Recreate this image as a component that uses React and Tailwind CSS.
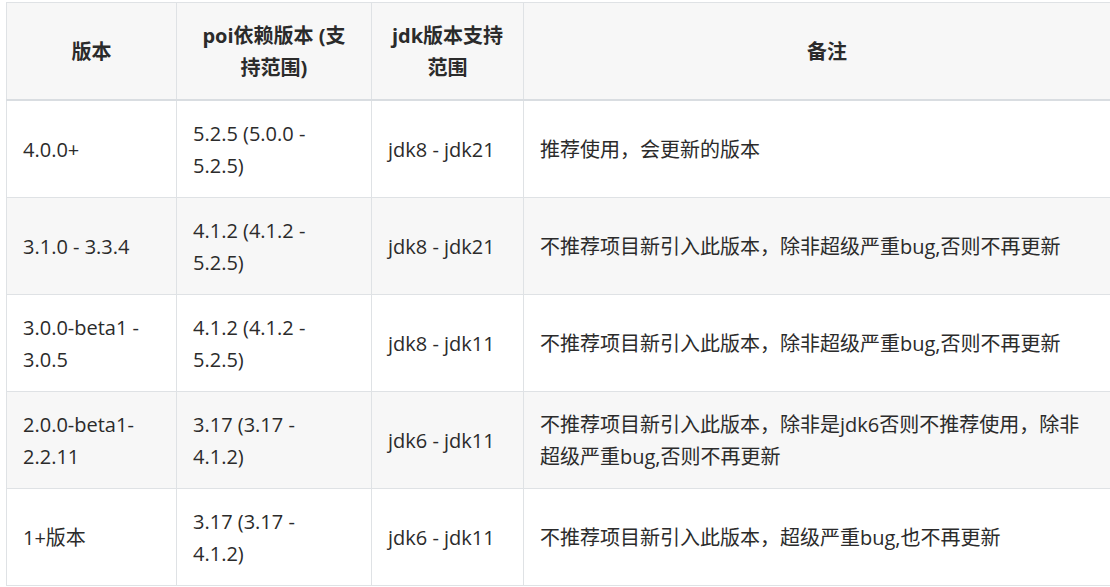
const rows = [
  { v: ['4.0.0+'], poi: ['5.2.5 (5.0.0 -', '5.2.5)'], jdk: 'jdk8 - jdk21', note: ['推荐使用，会更新的版本'] },
  { v: ['3.1.0 - 3.3.4'], poi: ['4.1.2 (4.1.2 -', '5.2.5)'], jdk: 'jdk8 - jdk21', note: ['不推荐项目新引入此版本，除非超级严重bug,否则不再更新'] },
  { v: ['3.0.0-beta1 -', '3.0.5'], poi: ['4.1.2 (4.1.2 -', '5.2.5)'], jdk: 'jdk8 - jdk11', note: ['不推荐项目新引入此版本，除非超级严重bug,否则不再更新'] },
  { v: ['2.0.0-beta1-', '2.2.11'], poi: ['3.17 (3.17 -', '4.1.2)'], jdk: 'jdk6 - jdk11', note: ['不推荐项目新引入此版本，除非是jdk6否则不推荐使用，除非', '超级严重bug,否则不再更新'] },
  { v: ['1+版本'], poi: ['3.17 (3.17 -', '4.1.2)'], jdk: 'jdk6 - jdk11', note: ['不推荐项目新引入此版本，超级严重bug,也不再更新'] },
];

const td = 'border border-[#dfe2e5] px-4 pt-[17px] pb-[15px] align-middle';
const th = 'border border-[#dfe2e5] border-b-2 border-b-[#d9dde1] px-4 pt-[17px] pb-[15px] align-middle text-center font-bold';

function Lines({ items }) {
  return items.map((t, i) => (
    <div key={i} className="whitespace-nowrap">{t}</div>
  ));
}

export default function App() {
  return (
    <div className="w-[1110px] h-[587px] overflow-hidden bg-white pt-[2px] pl-[6px] text-[#2b2b2b] font-['Open_Sans','Noto_Sans_CJK_SC',sans-serif] text-[20px] leading-[32px]">
      <table className="table-fixed border-collapse w-[1124px]">
        <colgroup>
          <col className="w-[170px]" />
          <col className="w-[195px]" />
          <col className="w-[152px]" />
          <col className="w-[607px]" />
        </colgroup>
        <thead>
          <tr className="bg-[#f7f7f7]">
            <th className={th}>版本</th>
            <th className={th}><Lines items={['poi依赖版本 (支', '持范围)']} /></th>
            <th className={th}><Lines items={['jdk版本支持', '范围']} /></th>
            <th className={th}>备注</th>
          </tr>
        </thead>
        <tbody>
          {rows.map((r, i) => (
            <tr key={i} className={i % 2 === 1 ? 'bg-[#f7f7f7]' : 'bg-white'}>
              <td className={td}><Lines items={r.v} /></td>
              <td className={td}><Lines items={r.poi} /></td>
              <td className={td}><div className="whitespace-nowrap">{r.jdk}</div></td>
              <td className={td}><Lines items={r.note} /></td>
            </tr>
          ))}
        </tbody>
      </table>
    </div>
  );
}
